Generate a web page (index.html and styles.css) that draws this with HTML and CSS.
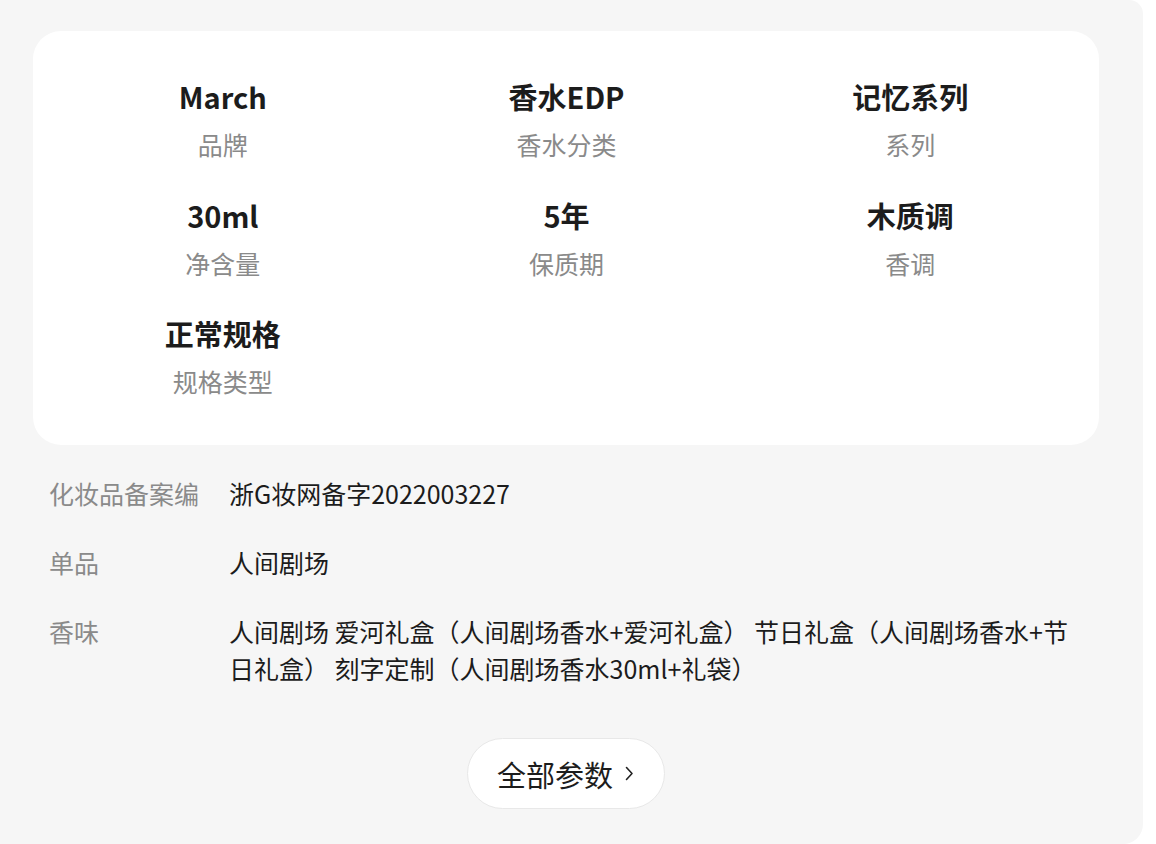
FILE: index.html
```html
<!DOCTYPE html>
<html lang="zh-CN">
<head>
<meta charset="utf-8">
<title>参数</title>
<link rel="stylesheet" href="styles.css">
</head>
<body>
<div class="panel">
  <div class="card">
    <div class="cell"><div class="val">March</div><div class="lab">品牌</div></div>
    <div class="cell"><div class="val">香水EDP</div><div class="lab">香水分类</div></div>
    <div class="cell"><div class="val">记忆系列</div><div class="lab">系列</div></div>
    <div class="cell"><div class="val">30ml</div><div class="lab">净含量</div></div>
    <div class="cell"><div class="val">5年</div><div class="lab">保质期</div></div>
    <div class="cell"><div class="val">木质调</div><div class="lab">香调</div></div>
    <div class="cell"><div class="val">正常规格</div><div class="lab">规格类型</div></div>
  </div>
  <div class="rows">
    <div class="row"><div class="rk">化妆品备案编</div><div class="rv">浙G妆网备字2022003227</div></div>
    <div class="row"><div class="rk">单品</div><div class="rv">人间剧场</div></div>
    <div class="row"><div class="rk">香味</div><div class="rv">人间剧场 爱河礼盒（人间剧场香水+爱河礼盒） 节日礼盒（人间剧场香水+节日礼盒） 刻字定制（人间剧场香水30ml+礼袋）</div></div>
  </div>
  <div class="btnwrap">
    <div class="btn">全部参数<svg class="chev" width="9" height="15" viewBox="0 0 9 15"><path d="M1.5 1.5 L7 7.5 L1.5 13.5" fill="none" stroke="#222" stroke-width="1.6" stroke-linecap="round" stroke-linejoin="round"/></svg></div>
  </div>
</div>
</body>
</html>
```

FILE: styles.css
```css
html, body {
  margin: 0;
  padding: 0;
  background: #ffffff;
}
body {
  font-family: "Noto Sans CJK SC", "Noto Sans", sans-serif;
  width: 1156px;
  height: 844px;
  overflow: hidden;
}
.panel {
  width: 1143px;
  height: 844px;
  box-sizing: border-box;
  background: #f6f6f6;
  border-radius: 0 14px 20px 0;
  padding: 31px 44px 0 33px;
}
.card {
  background: #ffffff;
  border-radius: 28px;
  padding: 45px 17px 46px 18px;
  display: grid;
  grid-template-columns: repeat(3, 1fr);
  row-gap: 32.5px;
}
.cell {
  display: flex;
  flex-direction: column;
  align-items: center;
}
.val {
  font-size: 29px;
  font-weight: 700;
  line-height: 40px;
  color: #1c1c1c;
}
.lab {
  margin-top: 10px;
  font-size: 25px;
  line-height: 36px;
  color: #8a8a8a;
}
.rows {
  padding: 30px 16px 0 16px;
  display: flex;
  flex-direction: column;
  gap: 32px;
}
.row {
  display: flex;
  font-size: 25px;
  line-height: 37px;
}
.rk {
  flex: 0 0 180px;
  color: #8a8a8a;
}
.rv {
  flex: 1;
  color: #1c1c1c;
}
.btnwrap {
  display: flex;
  justify-content: center;
  padding-top: 51px;
}
.btn {
  height: 71px;
  box-sizing: border-box;
  padding: 0 30px 0 29px;
  border: 1px solid #e8e8e8;
  border-radius: 36px;
  background: #ffffff;
  display: flex;
  align-items: center;
  gap: 12px;
  font-size: 29px;
  color: #1c1c1c;
}
.chev {
  display: block;
}
```
